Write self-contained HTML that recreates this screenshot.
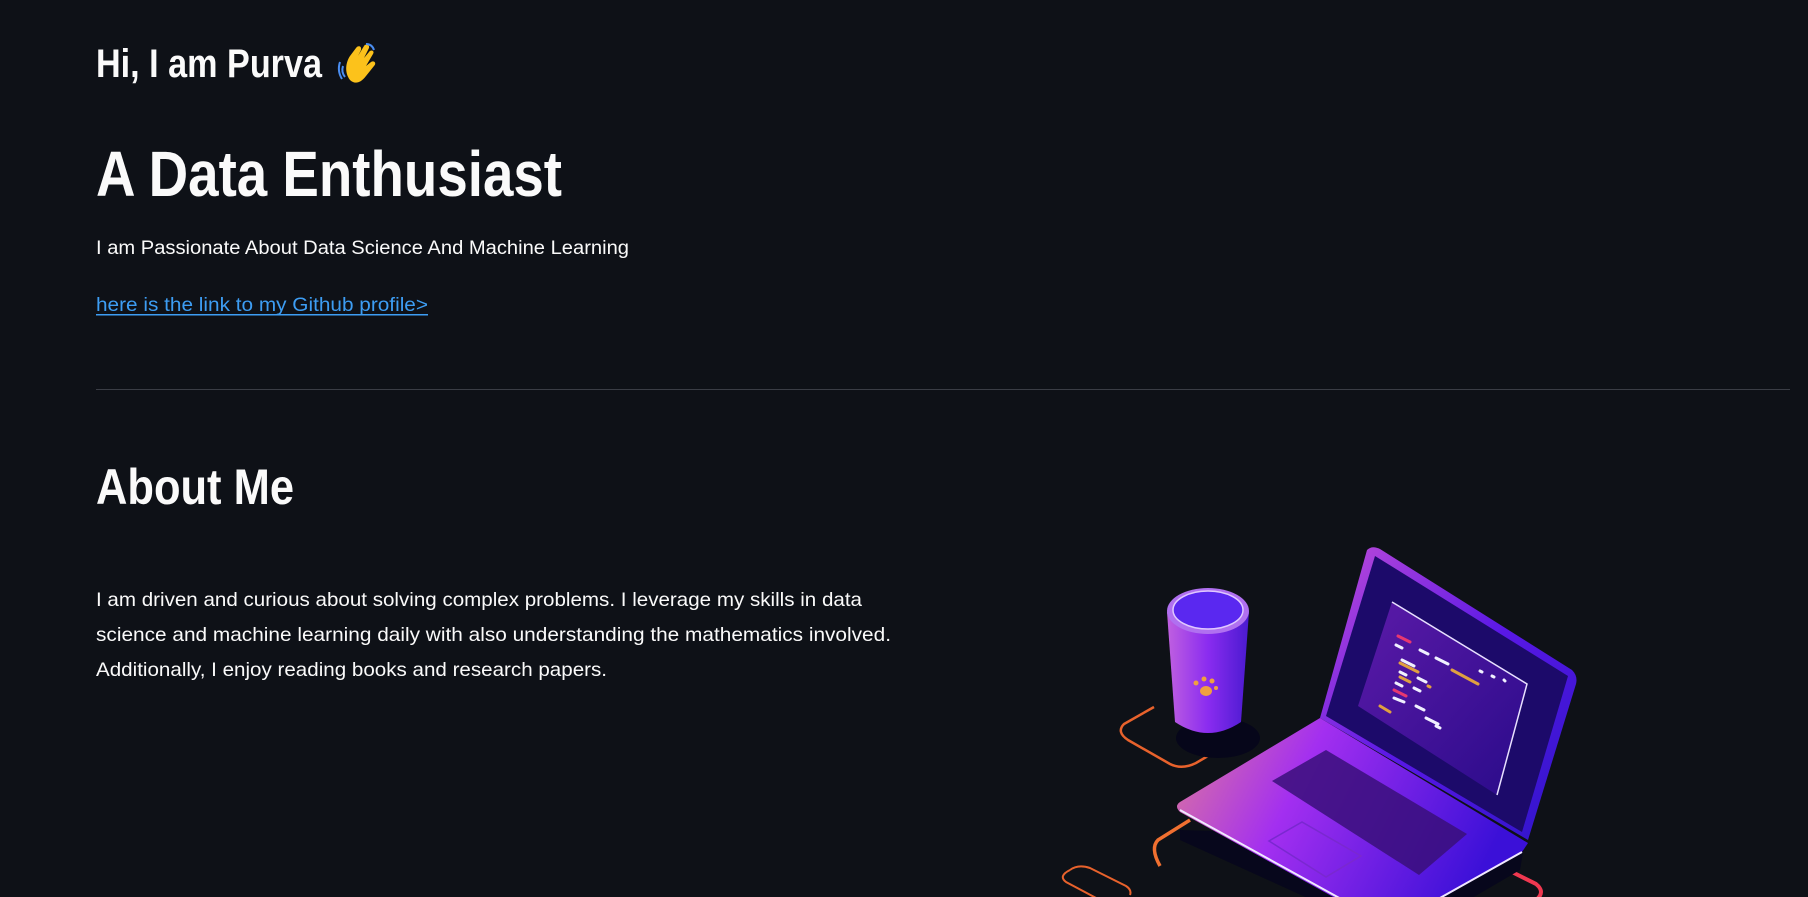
<!DOCTYPE html>
<html><head><meta charset="utf-8"><style>
html,body{margin:0;padding:0;background:#0e1117;width:1808px;height:897px;overflow:hidden}
svg{display:block}
text{font-family:"Liberation Sans",sans-serif;fill:#fafafa}
</style></head><body>
<svg width="1808" height="897" viewBox="0 0 1808 897" xmlns="http://www.w3.org/2000/svg">
<defs>
<linearGradient id="base" x1="0" y1="0" x2="1" y2="0.3">
<stop offset="0" stop-color="#e07a9a"/><stop offset="0.4" stop-color="#a32ff0"/><stop offset="1" stop-color="#3b10d8"/></linearGradient>
<linearGradient id="lid" x1="0" y1="0" x2="1" y2="1">
<stop offset="0" stop-color="#c04cd8"/><stop offset="0.5" stop-color="#5a18e6"/><stop offset="1" stop-color="#2d14c8"/></linearGradient>
<linearGradient id="scr" x1="0" y1="0" x2="1" y2="1">
<stop offset="0" stop-color="#5b1aa8"/><stop offset="1" stop-color="#2a0b8a"/></linearGradient>
<linearGradient id="cup" x1="0" y1="0" x2="1" y2="0">
<stop offset="0" stop-color="#c060e0"/><stop offset="0.5" stop-color="#8a2cf0"/><stop offset="1" stop-color="#4a1ad0"/></linearGradient>
</defs>

<text x="96" y="77" font-size="40" font-weight="bold" textLength="226" lengthAdjust="spacingAndGlyphs">Hi, I am Purva</text>
<g transform="translate(340,44)">
<path d="M10 36 C4 28 6 18 10 12 L16 4 C18 1 22 2 21 6 L18 12 L24 2 C26 -1 30 1 29 4 L24 14 L29 8 C31 5 35 7 33 10 L26 22 L31 18 C34 16 37 19 34 22 L26 32 C20 40 14 40 10 36 Z" fill="#fcc21b"/>
<path d="M3 22 Q1 28 5 33 M0 18 Q-3 27 2 35" stroke="#4a8df0" stroke-width="2" fill="none"/>
<path d="M26 0 Q32 0 34 6" stroke="#4a8df0" stroke-width="2" fill="none"/>
</g>

<text x="96" y="196" font-size="64" font-weight="bold" textLength="466" lengthAdjust="spacingAndGlyphs">A Data Enthusiast</text>
<text x="96" y="254" font-size="19" textLength="533" lengthAdjust="spacingAndGlyphs">I am Passionate About Data Science And Machine Learning</text>
<text x="96" y="311" font-size="19" style="fill:#3d9df3" textLength="332" lengthAdjust="spacingAndGlyphs">here is the link to my Github profile&gt;</text>
<rect x="96" y="314" width="332" height="1.5" fill="#3d9df3"/>

<rect x="96" y="389" width="1694" height="1" fill="#3a3d45"/>

<text x="96" y="504" font-size="50" font-weight="bold" textLength="198" lengthAdjust="spacingAndGlyphs">About Me</text>
<text x="96" y="606" font-size="19.5" textLength="766" lengthAdjust="spacingAndGlyphs">I am driven and curious about solving complex problems. I leverage my skills in data</text>
<text x="96" y="641" font-size="19.5" textLength="795" lengthAdjust="spacingAndGlyphs">science and machine learning daily with also understanding the mathematics involved.</text>
<text x="96" y="676" font-size="19.5" textLength="511" lengthAdjust="spacingAndGlyphs">Additionally, I enjoy reading books and research papers.</text>

<!-- illustration -->
<path d="M1154 707 L1124 724 Q1116 732 1128 740 L1170 764 Q1182 770 1196 763 L1232 742 Q1242 734 1234 724" stroke="#e8622c" stroke-width="2.5" fill="none"/>
<path d="M1070 870 Q1058 876 1066 882 L1098 899 L1107 899" stroke="#e8622c" stroke-width="2" fill="none"/>
<path d="M1070 870 Q1078 864 1090 868 L1126 886 Q1132 890 1130 895" stroke="#e8622c" stroke-width="2" fill="none"/>
<path d="M1190 820 L1158 840 Q1150 848 1160 866" stroke="#f07030" stroke-width="3.5" fill="none"/>
<path d="M1504 868 L1536 884 Q1546 892 1536 900 L1500 920" stroke="#f03850" stroke-width="4" fill="none"/>
<!-- shadows -->
<ellipse cx="1218" cy="738" rx="42" ry="20" fill="#06061a"/>
<path d="M1180 830 L1525 840 L1520 870 L1400 940 L1180 840 Z" fill="#07071c"/>
<!-- cup -->
<path d="M1167 612 L1175 722 Q1208 744 1241 722 L1249 612 Z" fill="url(#cup)"/>
<ellipse cx="1208" cy="611" rx="41" ry="23" fill="#b070f0"/>
<ellipse cx="1208" cy="610" rx="35" ry="19" fill="#5a28f0" stroke="#e0c8ff" stroke-width="1.5"/>
<ellipse cx="1206" cy="691" rx="6" ry="5" fill="#f0a040"/>
<circle cx="1196" cy="683" r="2.5" fill="#f0a040"/><circle cx="1204" cy="679" r="2.5" fill="#f0a040"/><circle cx="1212" cy="681" r="2.5" fill="#f0a040"/><circle cx="1216" cy="688" r="2" fill="#f0a040"/>
<!-- lid -->
<path d="M1367 550 Q1372 545 1380 549 L1572 670 Q1578 676 1576 684 L1528 840 L1320 718 Z" fill="url(#lid)"/>
<path d="M1375 556 L1568 676 L1522 832 L1326 716 Z" fill="#1c0a6a"/>
<path d="M1392 602 L1527 684 L1497 795 L1358 706 Z" fill="url(#scr)"/>
<path d="M1392 602 L1527 684 L1497 795" stroke="#e8e0ff" stroke-width="1.5" fill="none"/>
<g stroke-width="3" stroke-linecap="round">
<path d="M1398 636 L1410 642" stroke="#e83870"/>
<path d="M1396 645 L1402 648 M1420 650 L1428 654 M1436 658 L1448 664 M1480 671 L1482 672 M1492 676 L1494 677 M1504 680 L1505 681" stroke="#f0f0ff"/>
<path d="M1402 660 L1414 666 M1400 672 L1406 675 M1418 678 L1426 682 M1396 683 L1402 686 M1414 688 L1420 691 M1394 698 L1404 702 M1416 706 L1424 710 M1426 718 L1438 724 M1436 726 L1440 728" stroke="#f0f0ff"/>
<path d="M1400 663 L1418 672 M1400 677 L1410 682 M1452 670 L1478 684 M1428 686 L1430 687 M1380 706 L1390 712" stroke="#e0a040"/>
<path d="M1394 690 L1406 696" stroke="#e83870"/>
</g>
<!-- base -->
<path d="M1320 718 L1528 843 L1522 852 L1397 924 Q1390 928 1382 924 L1180 812 Q1174 806 1180 802 Z" fill="url(#base)"/>
<path d="M1180 810 L1390 926 L1522 852" stroke="#f0e8ff" stroke-width="2" fill="none"/>
<path d="M1272 781 L1326 750 L1467 834 L1419 875 Z" fill="#3a0f7a" opacity="0.85"/>
<path d="M1269 841 L1302 822 L1361 856 L1326 877 Z" fill="none" stroke="#7a28d0" stroke-width="1.5"/>
</svg>
</body></html>
